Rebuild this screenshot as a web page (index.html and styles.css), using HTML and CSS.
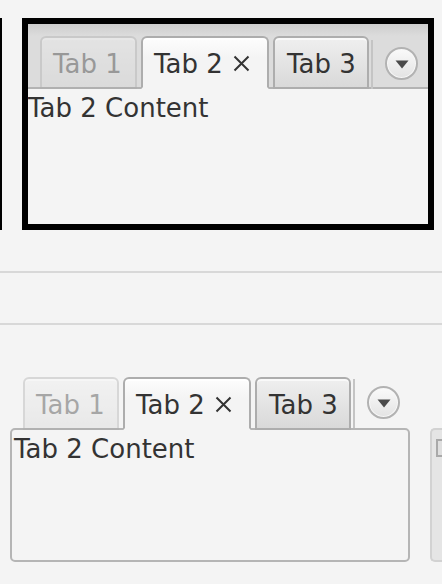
FILE: index.html
```html
<!DOCTYPE html>
<html>
<head>
<meta charset="utf-8">
<link rel="stylesheet" href="styles.css">
</head>
<body>
<div class="top">
  <div class="edge"></div>
  <div class="frame">
    <div class="header">
      <div class="tab t1 disabled"><span>Tab 1</span></div>
      <div class="tab t2 selected"><span>Tab 2</span><svg class="close" width="17" height="17" viewBox="0 0 17 17"><path d="M1.5 1.5L15.5 15.5M15.5 1.5L1.5 15.5" stroke="#333" stroke-width="2" fill="none"/></svg></div>
      <div class="tab t3"><span>Tab 3</span></div>
      <div class="controls"><div class="menu"><svg width="14" height="9" viewBox="0 0 14 9"><path d="M0.5 0.5H13.5L7 8.5Z" fill="#4a4a4a"/></svg></div></div>
    </div>
    <div class="content">Tab 2 Content</div>
  </div>
</div>
<div class="rule"></div>
<div class="rule second"></div>
<div class="bottom">
  <div class="fpane">
    <div class="fheader">
      <div class="tab ftab t1 fb1 disabled"><span>Tab 1</span></div>
      <div class="tab ftab t2 selected"><span>Tab 2</span><svg class="close" width="17" height="17" viewBox="0 0 17 17"><path d="M1.5 1.5L15.5 15.5M15.5 1.5L1.5 15.5" stroke="#333" stroke-width="2" fill="none"/></svg></div>
      <div class="tab ftab t3"><span>Tab 3</span></div>
      <div class="controls fcontrols"><div class="menu"><svg width="14" height="9" viewBox="0 0 14 9"><path d="M0.5 0.5H13.5L7 8.5Z" fill="#4a4a4a"/></svg></div></div>
    </div>
    <div class="fcontent">Tab 2 Content</div>
  </div>
  <div class="side"><div class="sidetab"></div></div>
</div>
</body>
</html>
```

FILE: styles.css
```css
html, body {
  margin: 0;
  padding: 0;
}
body {
  background: #f4f4f4;
  font-family: "DejaVu Sans", sans-serif;
  font-size: 26px;
  color: #333333;
  width: 442px;
  height: 584px;
  overflow: hidden;
}
.top {
  display: flex;
  padding-top: 18px;
  height: 212px;
}
.edge {
  width: 2px;
  background: #000;
}
.frame {
  margin-left: 20px;
  width: 400px;
  height: 200px;
  border: 6px solid #000;
  flex: none;
}
.header {
  height: 65px;
  box-sizing: border-box;
  padding: 12px 0 0 12px;
  display: flex;
  align-items: flex-end;
  background: linear-gradient(#cdcdcd, #dcdcdc 12px, #dcdcdc);
  box-shadow: inset 0 -2px 0 #b3b3b3;
}
.tab {
  height: 53px;
  box-sizing: border-box;
  border: 2px solid #adadad;
  border-radius: 6px 6px 0 0;
  padding: 2px 0 0 11px;
  display: flex;
  align-items: center;
  gap: 10px;
  background: linear-gradient(#efefef, #d9d9d9);
  box-shadow: inset 0 2px 0 #f9f9f9;
  margin-right: 4px;
  line-height: 1;
  white-space: nowrap;
  flex: none;
}
.t1 { width: 97px; }
.t2 { width: 128px; }
.t3 { width: 96px; padding-left: 12px; }
.fb1 { width: 96px; }
.tab span {
  display: block;
  padding-top: 1px;
}
.tab.selected {
  border-bottom-color: #f4f4f4;
  background: linear-gradient(#fdfdfd, #f4f4f4 40%, #f4f4f4);
  box-shadow: inset 0 2px 0 #ffffff;
}
.tab.disabled {
  opacity: 0.4;
}
.close {
  display: block;
  flex: none;
  margin-top: -1px;
}
.controls {
  height: 49px;
  box-sizing: border-box;
  border-left: 2px solid #c4c4c4;
  margin-left: -2px;
  padding: 7px 0 0 12px;
  display: flex;
  align-items: flex-start;
  flex: none;
}
.menu {
  width: 33px;
  height: 33px;
  box-sizing: border-box;
  border-radius: 50%;
  border: 2px solid #b2b2b2;
  background: linear-gradient(#fafafa, #e3e3e3);
  box-shadow: inset 0 0 0 1px #f7f7f7;
  display: flex;
  align-items: center;
  justify-content: center;
}
.menu svg {
  display: block;
  margin-top: 2px;
}
.content {
  padding-top: 5px;
  line-height: 1.12;
}
.rule {
  height: 2px;
  background: #d8d8d8;
  margin-top: 41px;
}
.rule.second {
  margin-top: 50px;
}
.bottom {
  display: flex;
  align-items: flex-end;
  margin-top: 52px;
}
.fpane {
  margin-left: 10px;
  width: 400px;
  flex: none;
}
.fheader {
  display: flex;
  align-items: flex-end;
  padding-left: 13px;
  height: 51px;
}
.ftab {
  margin-bottom: -2px;
  position: relative;
  z-index: 1;
}
.fcontent {
  height: 134px;
  box-sizing: border-box;
  border: 2px solid #b5b5b5;
  border-radius: 5px;
  padding: 5px 2px;
  line-height: 1.12;
}
.side {
  margin-left: 20px;
  width: 12px;
  height: 134px;
  box-sizing: border-box;
  border: 2px solid #d2d2d2;
  border-right: 0;
  border-radius: 5px 0 0 5px;
  background: #e5e5e5;
  flex: none;
  padding: 9px 0 0 4px;
  overflow: hidden;
}
.sidetab {
  width: 12px;
  height: 18px;
  box-sizing: border-box;
  border: 2px solid #a9a9a9;
  background: #dfdfdf;
}
```
